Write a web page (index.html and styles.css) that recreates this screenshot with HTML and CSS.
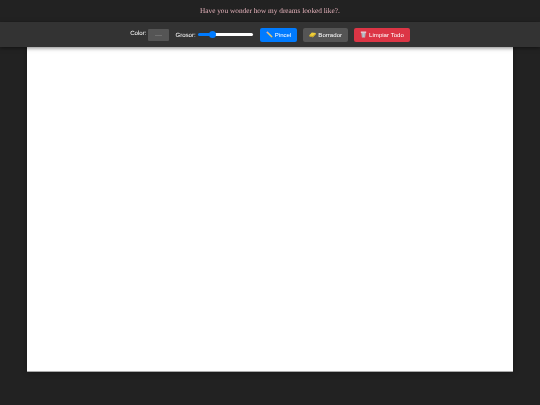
FILE: index.html
```html
<!DOCTYPE html>
<html lang="en">
<head>
  <meta charset="UTF-8">
  <meta name="viewport" content="width=device-width, initial-scale=1.0">
  <title>Dreams</title>
  <link rel="stylesheet" href="styles.css">
</head>
<body>
  <p class="title">Have you wonder how my dreams looked like?.</p>
  <div class="toolbar">
    <label class="field field-color">Color:
      <span class="swatch"><span class="swatch-line"></span></span>
    </label>
    <label class="field field-size">Grosor:
      <input type="range" class="slider" min="1" max="50" value="12">
    </label>
    <button class="btn btn-brush">
      <svg class="icon" viewBox="0 0 10 10"><path d="M.6 2.2 2.2.6 9 7.4 9.6 9.6 7.4 9z" fill="#e8c86a"/><path d="M.6 2.2 2.2.6 3.4 1.8 1.8 3.4z" fill="#e9a0b0"/><path d="M8.2 9.2 9.2 8.2 9.6 9.6z" fill="#444"/></svg>
      Pincel
    </button>
    <button class="btn btn-eraser">
      <svg class="icon" viewBox="0 0 10 10"><path d="M.4 6 4 2 9.6 2.8 9.6 4.8 5.6 8.8 1 8z" fill="#f0cf38"/><path d="M1 8 5.6 8.8 9.6 4.8 9.6 3.6 5.4 7.2.6 6.4z" fill="#bfa02c"/></svg>
      Borrador
    </button>
    <button class="btn btn-clear">
      <svg class="icon" viewBox="0 0 10 10"><path d="M1.2.8h7.6v1.8H1.2z" fill="#e4e7ea"/><path d="M2 2.8h6l-.7 6.6H2.7z" fill="#bcc2c8"/><path d="M3.6 3.6h.6v5h-.6zM5.8 3.6h.6v5h-.6z" fill="#9aa1a8"/></svg>
      Limpiar Todo
    </button>
  </div>
  <div class="canvas"></div>
</body>
</html>
```

FILE: styles.css
```css
html, body {
  height: 100%;
}

body {
  margin: 0;
  background-color: #222222;
  font-family: "Liberation Sans", Arial, sans-serif;
  text-rendering: geometricPrecision;
  display: flex;
  flex-direction: column;
  align-items: center;
  overflow: hidden;
}

.title {
  margin: 0;
  height: 22px;
  line-height: 22px;
  font-family: "Liberation Serif", "Times New Roman", serif;
  font-size: 7.3px;
  color: #e6b3bc;
  will-change: transform;
}

.toolbar {
  position: relative;
  z-index: 1;
  width: 100%;
  height: 25px;
  background-color: #333333;
  box-shadow: 0 1px 4px rgba(0, 0, 0, 0.5);
  display: flex;
  align-items: center;
  justify-content: center;
  gap: 6px;
}

.field {
  display: flex;
  align-items: center;
  gap: 2px;
  color: #ffffff;
  font-size: 6.1px;
}

.field-color {
  align-items: flex-start;
  line-height: 9px;
  margin-top: 1px;
}

.field-size {
  margin-top: 1px;
  margin-right: 1px;
}

.swatch {
  width: 21px;
  height: 12px;
  background-color: #555555;
  border-radius: 1px;
  display: flex;
  align-items: center;
  justify-content: center;
}

.swatch-line {
  width: 7px;
  height: 1px;
  background-color: #6e6e6e;
}

.slider {
  appearance: none;
  -webkit-appearance: none;
  width: 55px;
  height: 3px;
  margin: 0 0 1px;
  border-radius: 2px;
  background: linear-gradient(to right, #007bff 0 25%, #ffffff 25%);
}

.slider::-webkit-slider-thumb {
  -webkit-appearance: none;
  width: 7px;
  height: 7px;
  border-radius: 50%;
  background-color: #007bff;
}

.btn {
  height: 14px;
  padding: 0 6px;
  border: none;
  border-radius: 2px;
  color: #ffffff;
  font-family: inherit;
  font-size: 6.1px;
  display: flex;
  align-items: center;
  gap: 2px;
  cursor: pointer;
}

.icon {
  width: 7px;
  height: 7px;
}

.btn-brush {
  background-color: #007bff;
}

.btn-eraser {
  background-color: #555555;
}

.btn-clear {
  background-color: #dc3545;
}

.canvas {
  box-sizing: border-box;
  width: 486px;
  height: 325px;
  background-color: #ffffff;
  border-bottom: 1px solid #aaaaaa;
  box-shadow: 0 0 6px rgba(0, 0, 0, 0.3);
}
```
